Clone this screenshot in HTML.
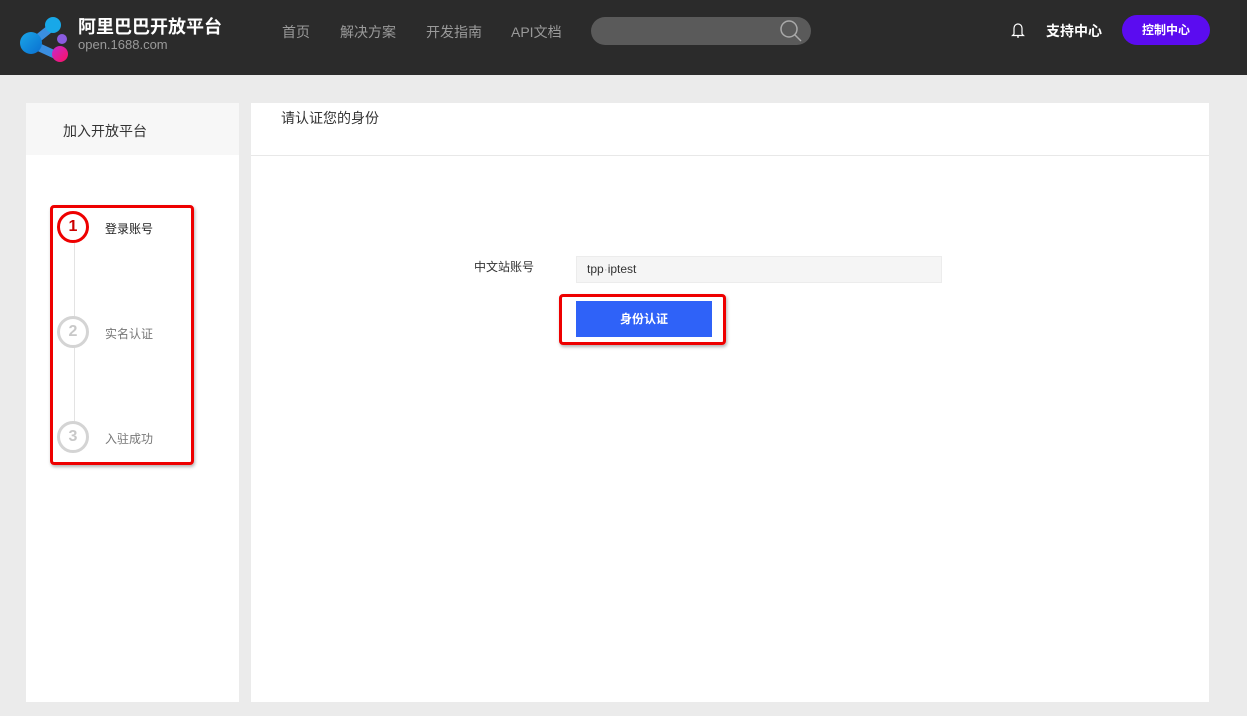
<!DOCTYPE html>
<html><head><meta charset="utf-8"><style>
*{margin:0;padding:0;box-sizing:border-box}
body{width:1247px;height:716px;background:#ebebeb;font-family:"Liberation Sans","Noto Sans CJK SC",sans-serif;position:relative;overflow:hidden}
.hd{position:absolute;left:0;top:0;width:1247px;height:75px;background:#2b2b2b}
.abs{position:absolute}
.nav{color:#9a9a9a;font-size:14px;top:22px}
.panel{position:absolute;background:#fff;top:103px;height:599px}
.circ{position:absolute;width:32px;height:32px;border-radius:50%;border:3px solid #d4d4d4;color:#c8c8c8;font-size:16px;font-weight:bold;text-align:center;line-height:25px;background:#fff}
.step{position:absolute;left:105px;font-size:12px;color:#777}
</style></head><body>
<div class="hd">
<svg class="abs" style="left:18px;top:11px" width="52" height="52" viewBox="0 0 52 52">
<defs><linearGradient id="g1" x1="0" y1="0" x2="1" y2="1"><stop offset="0" stop-color="#1aa6e8"/><stop offset="1" stop-color="#0a6fd0"/></linearGradient>
<linearGradient id="g2" x1="0" y1="0" x2="1" y2="1"><stop offset="0" stop-color="#c02ad0"/><stop offset="1" stop-color="#ff1060"/></linearGradient></defs>
<path d="M14 32 L34 16 M16 34 L40 45" stroke="#3a8ee0" stroke-width="8" stroke-linecap="round"/>
<circle cx="35" cy="14" r="8" fill="#18a8e8"/>
<circle cx="13" cy="32" r="11" fill="url(#g1)"/>
<circle cx="42" cy="43" r="8" fill="url(#g2)"/>
<circle cx="44" cy="28" r="5" fill="#8a5ce0"/>
</svg>
<div class="abs" style="left:78px;top:13px;color:#fff;font-size:18px;font-weight:bold">阿里巴巴开放平台</div>
<div class="abs" style="left:78px;top:37px;color:#9a9a9a;font-size:13px">open.1688.com</div>
<div class="abs nav" style="left:282px">首页</div>
<div class="abs nav" style="left:340px">解决方案</div>
<div class="abs nav" style="left:426px">开发指南</div>
<div class="abs nav" style="left:511px">API文档</div>
<div class="abs" style="left:591px;top:17px;width:220px;height:28px;border-radius:14px;background:#5a5a5a"></div>
<svg class="abs" style="left:779px;top:19px" width="24" height="24" viewBox="0 0 24 24"><circle cx="10" cy="10" r="8" fill="none" stroke="#aaa" stroke-width="1.5"/><path d="M16 16 L22 22" stroke="#aaa" stroke-width="1.5"/></svg>
<svg class="abs" style="left:1011px;top:21px" width="14" height="18" viewBox="0 0 14 18"><path d="M3 13 V7 a4 4 0 0 1 8 0 V13 L12.5 14.5 H1.5 Z M6 16 H8" fill="none" stroke="#fff" stroke-width="1.2"/></svg>
<div class="abs" style="left:1046px;top:21px;color:#fff;font-size:14px;font-weight:bold">支持中心</div>
<div class="abs" style="left:1122px;top:15px;width:88px;height:30px;border-radius:15px;background:#5b0cf0;color:#fff;font-size:12px;font-weight:bold;text-align:center;line-height:30px">控制中心</div>
</div>

<div class="panel" style="left:26px;width:213px">
<div style="height:52px;background:#f7f7f7;font-size:14px;color:#333;padding:18px 0 0 37px">加入开放平台</div>
</div>
<div class="abs" style="left:74px;top:228px;width:1px;height:210px;background:#e3e3e3"></div>
<div class="circ" style="left:57px;top:211px;border-color:#e00;color:#c00">1</div>
<div class="step" style="top:220px;color:#222">登录账号</div>
<div class="circ" style="left:57px;top:316px">2</div>
<div class="step" style="top:325px">实名认证</div>
<div class="circ" style="left:57px;top:421px">3</div>
<div class="step" style="top:430px">入驻成功</div>
<div class="abs" style="left:50px;top:205px;width:144px;height:260px;border:3px solid #e00;border-radius:4px;box-shadow:1px 2px 3px rgba(0,0,0,.3)"></div>

<div class="panel" style="left:251px;width:958px">
<div style="height:53px;border-bottom:1px solid #e8e8e8;font-size:14px;color:#333;padding:5px 0 0 30px">请认证您的身份</div>
</div>
<div class="abs" style="left:474px;top:258px;font-size:12px;color:#333">中文站账号</div>
<div class="abs" style="left:576px;top:256px;width:366px;height:27px;background:#f5f5f5;border:1px solid #ececec;font-size:12px;color:#333;padding:5px 0 0 10px">tpp<span style="color:#bbb">·</span>iptest</div>
<div class="abs" style="left:576px;top:301px;width:136px;height:36px;background:#2f62f8;color:#fff;font-size:12px;font-weight:bold;text-align:center;line-height:36px">身份认证</div>
<div class="abs" style="left:559px;top:294px;width:167px;height:51px;border:3px solid #e00;border-radius:4px;box-shadow:1px 2px 3px rgba(0,0,0,.3)"></div>
</body></html>
